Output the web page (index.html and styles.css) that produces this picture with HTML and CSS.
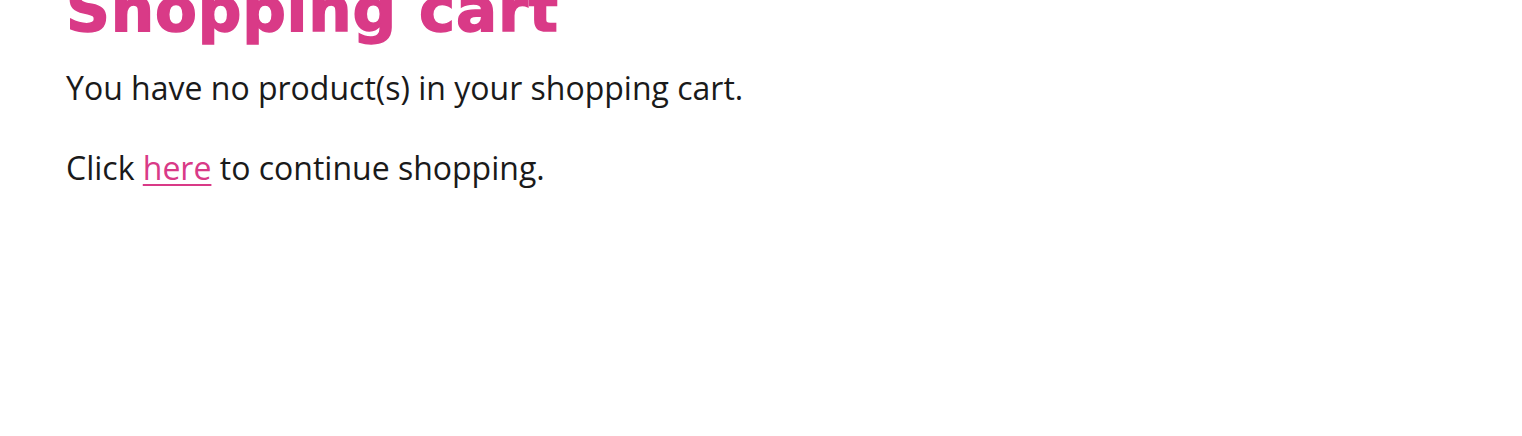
FILE: index.html
```html
<!DOCTYPE html>
<html lang="en">
<head>
<meta charset="utf-8">
<title>Shopping cart</title>
<link rel="stylesheet" href="styles.css">
</head>
<body>
<main class="cart">
  <h1 class="cart-title">Shopping cart</h1>
  <p class="cart-text">You have no product(s) in your shopping cart.</p>
  <p class="cart-text">Click <a class="cart-link" href="#">here</a> to continue shopping.</p>
</main>
</body>
</html>
```
FILE: styles.css
```css
html, body {
  margin: 0;
  padding: 0;
  background: #ffffff;
  overflow: hidden;
}
.cart {
  padding-left: 66px;
  font-family: "Open Sans", "Noto Sans", sans-serif;
  color: #1a1a1a;
}
.cart-title {
  margin: -23px 0 21px 0;
  font-family: "DejaVu Sans", Inter, sans-serif;
  font-weight: 700;
  font-size: 61px;
  line-height: 66px;
  letter-spacing: 0.8px;
  color: #d93a87;
  -webkit-text-stroke: 1.5px #d93a87;
}
.cart-text {
  margin: 0 0 32px 0;
  font-size: 32px;
  line-height: 48px;
}
.cart-link {
  color: #d93a87;
  text-decoration: underline;
  text-underline-offset: 4px;
  text-decoration-thickness: 2px;
}
```
